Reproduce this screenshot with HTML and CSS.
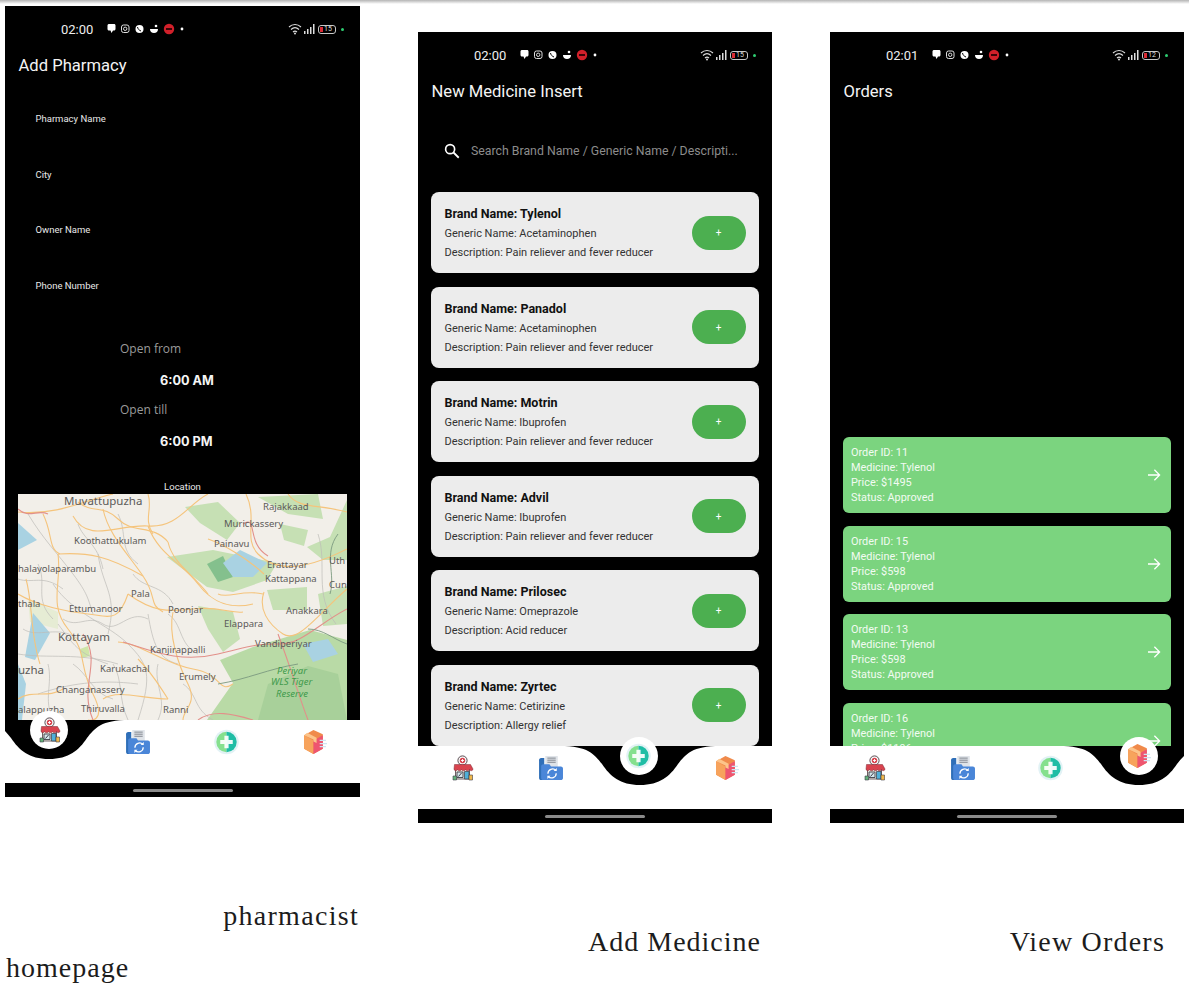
FILE: index.html
```html
<!DOCTYPE html>
<html lang="en">
<head>
    <meta charset="UTF-8">
    <meta name="viewport" content="width=device-width, initial-scale=1.0">
    <title>Pharmacist screens</title>
    <link rel="stylesheet" href="styles.css">
</head>
<body>
    <svg class="defs" width="0" height="0" aria-hidden="true">
        <symbol id="notch" viewBox="-80 0 160 40">
            <path d="M-80 0H80C52 0 46 8 38 18 30 30 20 39 0 39-20 39-30 30-38 18-46 8-52 0-80 0Z" fill="#000"/>
        </symbol>
        <symbol id="shop" viewBox="0 0 24 26">
            <circle cx="12" cy="5.500" r="4.600" fill="#f6f6f6" stroke="#4a3a40" stroke-width=".9"/>
            <circle cx="12" cy="5.500" r="2.700" fill="#d8434e"/>
            <path d="M10.600 5.500h2.800M12 4.100v2.800" stroke="#fff" stroke-width="1"/>
            <path d="M5 14h14v10H5z" fill="#ece8e0" stroke="#4a3a40" stroke-width=".8"/>
            <path d="M4 9.500h16l2.500 4.500c0 2-2.800 2.200-3.600.6-.8 1.600-3.100 1.600-3.900 0-.8 1.600-3.200 1.600-4 0-.8 1.600-3.100 1.600-3.900 0-.8 1.600-3.600 1.400-3.600-.6z" fill="#d8434e" stroke="#7a2a34" stroke-width=".5"/>
            <path d="M6.500 17h6v5.500h-6z" fill="#d5e6ec" stroke="#3c3c46" stroke-width=".9"/>
            <path d="M8 21.500l3-3.500" stroke="#3c3c46" stroke-width="1"/>
            <path d="M14 16.500h4.500V24H14z" fill="#4fb0d8" stroke="#3c3c46" stroke-width=".7"/>
            <path d="M2.500 21h3.500v4H2.500z" fill="#63b27a" stroke="#3c3c46" stroke-width=".6"/>
            <path d="M18.500 20H22v5h-3.500z" fill="#f1b84b" stroke="#3c3c46" stroke-width=".6"/>
        </symbol>
        <symbol id="folder" viewBox="0 0 24 25">
            <path d="M1 5c0-1 .7-2 2-2h3v21H3c-1.300 0-2-.8-2-2z" fill="#2f6fb8"/>
            <path d="M7 1h12v11H7z" fill="#dfe3e8"/>
            <path d="M9 3h8M9 5h8M9 7h8" stroke="#7d828a" stroke-width=".9"/>
            <path d="M5 9h6l1.500 2H22c1 0 2 .8 2 2v9c0 1.300-1 2-2 2H5c-1 0-2-.7-2-2V11c0-1.300 1-2 2-2z" fill="#4a86d8"/>
            <path d="M9.500 18a4.500 4.500 0 0 1 7.700-3.200M17.500 17.500a4.500 4.500 0 0 1-7.700 3.200" fill="none" stroke="#fff" stroke-width="1.200"/>
            <path d="M18 12.500v3h-3zM9 23v-3h3z" fill="#fff"/>
        </symbol>
        <symbol id="plus" viewBox="0 0 24 24">
            <circle cx="12" cy="12" r="11.800" fill="#e2f2f5"/>
            <path d="M12 2.200a9.800 9.800 0 0 0 0 19.600z" fill="#85e08e"/>
            <path d="M12 2.200a9.800 9.800 0 0 1 0 19.600z" fill="#1fbda5"/>
            <path d="M10 6h4v4h4v4h-4v4h-4v-4H6v-4h4z" fill="#fff" fill-opacity=".92"/>
        </symbol>
        <symbol id="box" viewBox="0 0 24 25">
            <path d="M11 1l9 4v14l-9 5-9-5V6z" fill="#f08a4b"/>
            <path d="M2 6l9 5v13l-9-5z" fill="#f7a35c"/>
            <path d="M11 11l9-5v13l-9 5z" fill="#ee5570"/>
            <path d="M5 3.500l9 5v5l-3-1.500V10L2 6z" fill="#fcc48a"/>
            <path d="M17 11h6M17 14h7M17 17h6" stroke="#cfe4f2" stroke-width="1.300"/>
        </symbol>
        <symbol id="status-left" viewBox="0 0 84 12">
            <path d="M1.500 2.500c0-1 .8-1.500 1.500-1.500h5c1 0 1.500.6 1.500 1.500V6c0 .8-.6 1.500-1.500 1.500H7L5.500 10 4.500 7.500H3C2 7.500 1.500 6.800 1.500 6z" fill="#fff"/>
            <rect x="15.500" y="2" width="7.500" height="7.500" rx="2" fill="none" stroke="#ddd"/>
            <circle cx="19.200" cy="5.800" r="1.700" fill="none" stroke="#ddd"/>
            <circle cx="33.500" cy="6" r="4" fill="#fff"/>
            <path d="M31.500 4c.4 2 1.500 3.200 3.500 4" stroke="#000" fill="none"/>
            <path d="M44 6h8c0 2.500-1.500 4-4 4s-4-1.500-4-4z" fill="#fff"/>
            <circle cx="50" cy="3" r="1.300" fill="#fff"/>
            <circle cx="63" cy="6" r="5.200" fill="#d1202a"/>
            <path d="M60 6h6" stroke="#3a0508" stroke-width="2"/>
            <circle cx="76" cy="6" r="1.400" fill="#fff"/>
        </symbol>
        <symbol id="wifi" viewBox="0 0 30 12">
            <path d="M1 4c3.500-3.300 8.500-3.300 12 0M3 6.500c2.500-2.300 5.500-2.300 8 0M5 9c1.300-1.200 2.700-1.200 4 0" fill="none" stroke="#ddd" stroke-width="1.100"/>
            <circle cx="7" cy="10.500" r="1" fill="#ddd"/>
            <path d="M16 8h1.500v3H16zM19 6h1.500v5H19zM22 4h1.500v7H22zM25 1h1.500v10H25z" fill="#ddd"/>
        </symbol>
        <symbol id="arrow" viewBox="0 0 24 24">
            <path d="M4 12h15M12.500 5l7 7-7 7" fill="none" stroke="#fff" stroke-width="1.700"/>
        </symbol>
    </svg>

    <div class="topline"></div>

    <main class="sheet">
        <section class="col col-one">
            <div class="phone">
                <div class="status">
                    <span class="time">02:00</span>
                    <svg class="status-left"><use href="#status-left"/></svg>
                    <span class="status-right">
                        <svg class="wifi"><use href="#wifi"/></svg>
                        <span class="battery"><i class="charge"></i>15</span>
                        <span class="dot"></span>
                    </span>
                </div>
                <h1 class="title">Add Pharmacy</h1>
                <div class="content form">
                    <p class="field">Pharmacy Name</p>
                    <p class="field">City</p>
                    <p class="field">Owner Name</p>
                    <p class="field">Phone Number</p>
                    <div class="hours">
                        <p class="hours-label">Open from</p>
                        <p class="hours-value">6:00 AM</p>
                        <p class="hours-label">Open till</p>
                        <p class="hours-value">6:00 PM</p>
                    </div>
                    <p class="location">Location</p>
                    <svg class="map" viewBox="0 0 329 226" preserveAspectRatio="none">
                        <rect width="329" height="226" fill="#f2efe9"/>
                        <g fill="#c6e0b4">
                            <path d="M167 13L200 8 222 29 209 46 182 29Z"/>
                            <path d="M149 63L195 56 259 69 249 86 215 98 189 93 162 73Z"/>
                            <path d="M249 96L289 93 289 116 255 116Z"/>
                            <path d="M289 53L312 43 329 6V66H305Z"/>
                            <path d="M240 3L300 0 305 25 270 20Z"/>
                            <path d="M180 112L215 118 222 145 205 158 190 135Z"/>
                            <path d="M262 30L290 36 286 52 266 46Z"/>
                            <path d="M300 100L329 92V130L305 132Z"/>
                        </g>
                        <path d="M10 105L40 118 40 135 12 128Z" fill="#e6ecd4"/>
                        <path d="M62 155L70 152 72 162 64 164Z" fill="#cfe5a9"/>
                        <path d="M202 166L235 153 292 136 329 146V226H189L215 189Z" fill="#b9daa6"/>
                        <path d="M250 190L290 172 320 180 329 226H240Z" fill="#a8d09a"/>
                        <path d="M189 70L205 62 215 83 200 88Z" fill="#84c08d"/>
                        <g fill="#a9d2e2">
                            <path d="M205 69L222 56 249 69 235 83 215 83Z"/>
                            <path d="M0 29L19 46 0 56Z"/>
                            <path d="M15 119L32 139 17 166 7 163Z"/>
                            <path d="M0 170L8 190 4 226H0Z"/>
                            <path d="M285 150L310 145 320 160 295 168Z"/>
                        </g>
                        <g fill="none" stroke="#bdbbb8" stroke-width=".7">
                            <path d="M10 20C25 45 40 60 55 80S70 105 75 120"/>
                            <path d="M35 90C55 120 90 130 110 150S135 180 120 226"/>
                            <path d="M80 60C85 95 100 100 90 140"/>
                            <path d="M130 120C135 150 140 165 160 170"/>
                            <path d="M40 130C55 150 60 160 90 170"/>
                            <path d="M0 160C30 165 60 158 100 170"/>
                            <path d="M20 200C50 190 80 185 120 190"/>
                            <path d="M300 40C310 70 295 100 318 130"/>
                            <path d="M20 70C30 90 15 105 35 125"/>
                            <path d="M60 30C65 45 80 50 85 75"/>
                            <path d="M100 20C110 40 100 55 120 70"/>
                            <path d="M45 125C60 135 70 120 85 130S110 115 130 125"/>
                            <path d="M5 135C20 145 40 130 60 145"/>
                            <path d="M95 170C105 185 100 205 110 226"/>
                            <path d="M30 170C35 190 25 205 35 226"/>
                            <path d="M140 170C135 190 150 205 140 226"/>
                            <path d="M115 80C125 95 145 90 155 110"/>
                            <path d="M150 120C165 130 160 150 180 160"/>
                            <path d="M0 85C15 90 25 80 45 95"/>
                            <path d="M55 170C70 180 75 200 95 205"/>
                            <path d="M165 190C180 200 175 215 195 226"/>
                        </g>
                        <g fill="none" stroke="#f5c47c" stroke-width="1.100">
                            <path d="M0 18C40 22 70 5 95 0"/>
                            <path d="M55 22C70 50 100 30 130 32S170 10 190 0"/>
                            <path d="M85 15C90 40 110 60 125 82S130 110 145 118"/>
                            <path d="M130 32C140 60 165 70 180 90S215 115 235 110"/>
                            <path d="M40 60C44 90 30 110 50 135S60 170 75 200 70 226 70 226"/>
                            <path d="M40 60C70 58 90 62 125 82"/>
                            <path d="M110 100C135 118 150 118 175 115S215 120 225 118"/>
                            <path d="M155 118C150 140 160 170 170 190S165 215 165 226"/>
                            <path d="M100 148C125 150 145 170 175 175S200 200 215 190"/>
                            <path d="M0 100C20 112 50 118 70 120S100 130 110 100"/>
                            <path d="M228 0C240 25 225 45 240 60S280 80 329 55"/>
                            <path d="M246 98C240 115 250 130 265 140S300 120 329 95"/>
                            <path d="M190 45C205 50 230 65 246 80"/>
                            <path d="M60 8C75 20 85 10 100 25S135 30 150 48"/>
                            <path d="M25 20C35 40 30 55 42 60"/>
                            <path d="M130 0C135 15 125 25 135 40"/>
                            <path d="M150 48C155 70 175 80 190 100"/>
                            <path d="M8 85C15 110 12 140 22 170"/>
                            <path d="M120 165C135 180 140 190 150 205"/>
                            <path d="M85 205C100 195 125 205 150 205"/>
                            <path d="M200 100C210 105 225 95 245 100"/>
                            <path d="M0 205C15 195 30 205 45 195"/>
                            <path d="M270 0C280 15 300 10 329 18"/>
                        </g>
                        <g fill="none" stroke="#e2908a" stroke-width="1.100">
                            <path d="M65 140C85 170 60 190 75 226"/>
                            <path d="M105 148C130 155 160 170 200 160S240 150 262 150 300 130 329 115"/>
                            <path d="M225 30C240 20 228 50 250 62"/>
                            <path d="M260 140C275 180 280 200 290 226"/>
                            <path d="M0 15C10 25 20 15 30 20"/>
                            <path d="M180 226C195 215 215 220 235 226"/>
                        </g>
                        <path d="M290 135C305 135 315 145 329 150M200 190C230 185 250 175 280 170M320 40C305 60 318 80 312 100" fill="none" stroke="#7c9a80" stroke-width=".9"/>
                        <g class="map-labels">
                            <text x="46" y="11" class="big">Muvattupuzha</text>
                            <text x="245" y="16">Rajakkaad</text>
                            <text x="206" y="33">Murickassery</text>
                            <text x="196" y="53">Painavu</text>
                            <text x="56" y="50">Koothattukulam</text>
                            <text x="249" y="74">Erattayar</text>
                            <text x="311" y="70">Uth</text>
                            <text x="0" y="78">halayolaparambu</text>
                            <text x="247" y="88">Kattappana</text>
                            <text x="311" y="94">Cun</text>
                            <text x="113" y="103">Pala</text>
                            <text x="0" y="113">thala</text>
                            <text x="51" y="118">Ettumanoor</text>
                            <text x="150" y="119">Poonjar</text>
                            <text x="268" y="120">Anakkara</text>
                            <text x="206" y="133">Elappara</text>
                            <text x="40" y="147" class="big">Kottayam</text>
                            <text x="237" y="153">Vandiperiyar</text>
                            <text x="132" y="159">Kanjirappalli</text>
                            <text x="259" y="180" class="park">Periyar</text>
                            <text x="253" y="191" class="park">WLS Tiger</text>
                            <text x="258" y="203" class="park">Reserve</text>
                            <text x="82" y="178">Karukachal</text>
                            <text x="0" y="180" class="big">uzha</text>
                            <text x="161" y="186">Erumely</text>
                            <text x="38" y="199">Changanassery</text>
                            <text x="63" y="218">Thiruvalla</text>
                            <text x="145" y="219">Ranni</text>
                            <text x="0" y="219">alappuzha</text>
                        </g>
                    </svg>
                </div>
                <nav class="nav">
                    <svg class="notch notch-one"><use href="#notch"/></svg>
                    <span class="nav-item active"><svg><use href="#shop"/></svg></span>
                    <span class="nav-item"><svg><use href="#folder"/></svg></span>
                    <span class="nav-item"><svg><use href="#plus"/></svg></span>
                    <span class="nav-item"><svg><use href="#box"/></svg></span>
                </nav>
                <div class="home"><span class="home-bar"></span></div>
            </div>
            <p class="caption caption-top">pharmacist</p>
            <p class="caption caption-left">homepage</p>
        </section>

        <section class="col col-two">
            <div class="phone">
                <div class="status">
                    <span class="time">02:00</span>
                    <svg class="status-left"><use href="#status-left"/></svg>
                    <span class="status-right">
                        <svg class="wifi"><use href="#wifi"/></svg>
                        <span class="battery"><i class="charge"></i>15</span>
                        <span class="dot"></span>
                    </span>
                </div>
                <h1 class="title">New Medicine Insert</h1>
                <div class="content medicines">
                    <div class="search">
                        <svg class="search-icon" viewBox="0 0 24 24"><circle cx="9.500" cy="9.500" r="6" fill="none" stroke="#fff" stroke-width="2.200"/><path d="M14 14l7 7" stroke="#fff" stroke-width="2.400"/></svg>
                        <span class="search-text">Search Brand Name / Generic Name / Descripti...</span>
                    </div>
                    <div class="med-card">
                        <div class="med-info">
                            <p class="brand">Brand Name: Tylenol</p>
                            <p class="med-line">Generic Name: Acetaminophen</p>
                            <p class="med-line">Description: Pain reliever and fever reducer</p>
                        </div>
                        <button class="add-btn">+</button>
                    </div>
                    <div class="med-card">
                        <div class="med-info">
                            <p class="brand">Brand Name: Panadol</p>
                            <p class="med-line">Generic Name: Acetaminophen</p>
                            <p class="med-line">Description: Pain reliever and fever reducer</p>
                        </div>
                        <button class="add-btn">+</button>
                    </div>
                    <div class="med-card">
                        <div class="med-info">
                            <p class="brand">Brand Name: Motrin</p>
                            <p class="med-line">Generic Name: Ibuprofen</p>
                            <p class="med-line">Description: Pain reliever and fever reducer</p>
                        </div>
                        <button class="add-btn">+</button>
                    </div>
                    <div class="med-card">
                        <div class="med-info">
                            <p class="brand">Brand Name: Advil</p>
                            <p class="med-line">Generic Name: Ibuprofen</p>
                            <p class="med-line">Description: Pain reliever and fever reducer</p>
                        </div>
                        <button class="add-btn">+</button>
                    </div>
                    <div class="med-card">
                        <div class="med-info">
                            <p class="brand">Brand Name: Prilosec</p>
                            <p class="med-line">Generic Name: Omeprazole</p>
                            <p class="med-line">Description: Acid reducer</p>
                        </div>
                        <button class="add-btn">+</button>
                    </div>
                    <div class="med-card">
                        <div class="med-info">
                            <p class="brand">Brand Name: Zyrtec</p>
                            <p class="med-line">Generic Name: Cetirizine</p>
                            <p class="med-line">Description: Allergy relief</p>
                        </div>
                        <button class="add-btn">+</button>
                    </div>
                </div>
                <nav class="nav">
                    <svg class="notch notch-two"><use href="#notch"/></svg>
                    <span class="nav-item"><svg><use href="#shop"/></svg></span>
                    <span class="nav-item"><svg><use href="#folder"/></svg></span>
                    <span class="nav-item active"><svg><use href="#plus"/></svg></span>
                    <span class="nav-item"><svg><use href="#box"/></svg></span>
                </nav>
                <div class="home"><span class="home-bar"></span></div>
            </div>
            <p class="caption caption-two">Add Medicine</p>
        </section>

        <section class="col col-three">
            <div class="phone">
                <div class="status">
                    <span class="time">02:01</span>
                    <svg class="status-left"><use href="#status-left"/></svg>
                    <span class="status-right">
                        <svg class="wifi"><use href="#wifi"/></svg>
                        <span class="battery"><i class="charge"></i>12</span>
                        <span class="dot"></span>
                    </span>
                </div>
                <h1 class="title">Orders</h1>
                <div class="content orders">
                    <div class="order-card">
                        <div>
                            <p>Order ID: 11</p>
                            <p>Medicine: Tylenol</p>
                            <p>Price: $1495</p>
                            <p>Status: Approved</p>
                        </div>
                        <svg class="arrow"><use href="#arrow"/></svg>
                    </div>
                    <div class="order-card">
                        <div>
                            <p>Order ID: 15</p>
                            <p>Medicine: Tylenol</p>
                            <p>Price: $598</p>
                            <p>Status: Approved</p>
                        </div>
                        <svg class="arrow"><use href="#arrow"/></svg>
                    </div>
                    <div class="order-card">
                        <div>
                            <p>Order ID: 13</p>
                            <p>Medicine: Tylenol</p>
                            <p>Price: $598</p>
                            <p>Status: Approved</p>
                        </div>
                        <svg class="arrow"><use href="#arrow"/></svg>
                    </div>
                    <div class="order-card">
                        <div>
                            <p>Order ID: 16</p>
                            <p>Medicine: Tylenol</p>
                            <p>Price: $1196</p>
                            <p>Status: Approved</p>
                        </div>
                        <svg class="arrow"><use href="#arrow"/></svg>
                    </div>
                </div>
                <nav class="nav">
                    <svg class="notch notch-three"><use href="#notch"/></svg>
                    <span class="nav-item"><svg><use href="#shop"/></svg></span>
                    <span class="nav-item"><svg><use href="#folder"/></svg></span>
                    <span class="nav-item"><svg><use href="#plus"/></svg></span>
                    <span class="nav-item active"><svg><use href="#box"/></svg></span>
                </nav>
                <div class="home"><span class="home-bar"></span></div>
            </div>
            <p class="caption caption-three">View Orders</p>
        </section>
    </main>
</body>
</html>
```

FILE: styles.css
```css
*{
    margin: 0;
    padding: 0;
    box-sizing: border-box;
}
html,body{
    height: 985px;
    overflow: hidden;
    background-color: white;
}
body{
    font-family: Roboto, "Liberation Sans", sans-serif;
    position: relative;
}
.defs{
    position: absolute;
}
.topline{
    height: 4px;
    background: linear-gradient(#b4b4b4, #ffffff);
}

/* columns */
.sheet{
    display: flex;
    padding-left: 5px;
}
.col{
    flex: none;
}
.col-one{
    width: 355px;
    margin-top: 2px;
}
.col-two{
    width: 354px;
    margin-left: 58px;
    margin-top: 28px;
}
.col-three{
    width: 354px;
    margin-left: 58px;
    margin-top: 28px;
}

/* phone frame */
.phone{
    height: 791px;
    background-color: black;
    color: white;
    display: flex;
    flex-direction: column;
    overflow: hidden;
}
.status{
    height: 46px;
    flex: none;
    display: flex;
    align-items: center;
    padding-left: 56px;
    padding-right: 16px;
}
.time{
    font-size: 13px;
    width: 40px;
    color: #eeeeee;
}
.status-left{
    width: 84px;
    height: 12px;
    margin-left: 5px;
}
.status-right{
    margin-left: auto;
    display: flex;
    align-items: center;
}
.wifi{
    width: 30px;
    height: 12px;
}
.battery{
    width: 18px;
    height: 9px;
    border: 1px solid #c8c8c8;
    border-radius: 3px;
    font-size: 7px;
    line-height: 7px;
    text-align: center;
    color: #dddddd;
    position: relative;
    padding-left: 2px;
}
.charge{
    position: absolute;
    left: 1px;
    top: 1px;
    width: 3px;
    height: 5px;
    background-color: #d92c34;
}
.dot{
    width: 3px;
    height: 3px;
    border-radius: 50%;
    background-color: #2ecc71;
    margin-left: 5px;
}
.title{
    height: 26px;
    flex: none;
    padding-left: 13.5px;
    padding-top: 1px;
    font-size: 16.600px;
    font-weight: 400;
    line-height: 26px;
    color: #f4f4f4;
}
.content{
    flex: 1;
    min-height: 0;
    overflow: hidden;
}

/* add pharmacy */
.form{
    display: flex;
    flex-direction: column;
}
.field{
    height: 55.5px;
    padding-left: 30.5px;
    padding-top: 35px;
    font-size: 9.500px;
    line-height: 12px;
    color: #e8e8e8;
    flex: none;
}
.hours{
    padding-left: 115px;
    padding-top: 41px;
    flex: none;
}
.hours-label{
    font-family: "Open Sans", sans-serif;
    font-size: 12px;
    line-height: 16px;
    color: #9a9a9a;
}
.hours-value{
    font-family: Inter, sans-serif;
    font-size: 12.700px;
    font-weight: 700;
    line-height: 16px;
    margin-left: 40px;
    margin-top: 16px;
    margin-bottom: 13px;
    color: #f5f5f5;
}
.location{
    text-align: center;
    font-size: 9.500px;
    line-height: 12px;
    margin-top: 18px;
    color: #e8e8e8;
    flex: none;
}
.map{
    display: block;
    flex: none;
    width: 329px;
    height: 226px;
    margin-left: 13px;
    margin-top: 1px;
}
.map-labels text{
    font-family: "Noto Sans", sans-serif;
    font-size: 9.500px;
    fill: #5c5a58;
}
.map-labels .big{
    font-size: 11.500px;
}
.map-labels .park{
    font-style: italic;
    fill: #3f9a4c;
}

/* medicines */
.medicines{
    padding: 0 13px;
}
.search{
    height: 48px;
    margin-top: 23px;
    margin-bottom: 17px;
    display: flex;
    align-items: center;
    padding-left: 12px;
}
.search-icon{
    width: 18px;
    height: 18px;
    flex: none;
}
.search-text{
    margin-left: 10px;
    font-size: 12.300px;
    color: #8c8c8c;
    white-space: nowrap;
}
.med-card{
    height: 81px;
    margin-bottom: 13.500px;
    background-color: #ececec;
    border-radius: 8px;
    display: flex;
    align-items: center;
    padding: 0 13.500px;
    color: #333333;
}
.med-info{
    flex: 1;
    padding-top: 1px;
}
.brand{
    font-size: 12.500px;
    font-weight: 700;
    line-height: 19px;
    margin-bottom: 1px;
    color: #111111;
}
.med-line{
    font-size: 11px;
    line-height: 19px;
}
.add-btn{
    width: 54px;
    height: 34px;
    border: 0;
    border-radius: 17px;
    background-color: #4caf50;
    color: white;
    font-size: 10px;
    font-family: Roboto, sans-serif;
    flex: none;
}

/* orders */
.orders{
    padding: 0 13px;
    padding-top: 333px;
}
.order-card{
    height: 76px;
    margin-bottom: 12.700px;
    background-color: #7bd47f;
    border-radius: 6px;
    display: flex;
    align-items: center;
    justify-content: space-between;
    padding: 0 8px;
    font-size: 10.900px;
    line-height: 15px;
    color: #f2fbf2;
}
.arrow{
    width: 18px;
    height: 18px;
}

/* bottom nav */
.nav{
    height: 63px;
    flex: none;
    background-color: white;
    position: relative;
    display: grid;
    grid-template-columns: repeat(4, 1fr);
    padding-right: 1px;
}
.notch{
    position: absolute;
    top: 0;
    width: 160px;
    height: 40px;
}
.notch-one{
    left: -36px;
}
.notch-two{
    left: 142px;
}
.notch-three{
    left: 229px;
}
.nav-item{
    display: flex;
    justify-content: center;
    height: 44px;
    align-items: center;
    position: relative;
}
.nav-item svg{
    width: 25px;
    height: 26px;
}
.nav-item.active{
    top: -12px;
}
.nav-item.active::before{
    content: "";
    position: absolute;
    left: 50%;
    top: 3px;
    width: 38px;
    height: 38px;
    margin-left: -19px;
    background-color: white;
    border-radius: 50%;
}
.nav-item.active svg{
    position: relative;
}
.home{
    height: 14px;
    flex: none;
    display: flex;
    justify-content: center;
    align-items: center;
}
.home-bar{
    width: 100px;
    height: 3px;
    border-radius: 2px;
    background-color: #8a8a8a;
}

/* captions under the screenshots */
.caption{
    font-family: "Liberation Serif", serif;
    font-size: 28px;
    line-height: 52px;
    letter-spacing: 1px;
    color: #1c1c1c;
}
.caption-top{
    margin-top: 93px;
    text-align: right;
    padding-right: 1px;
    letter-spacing: 1.300px;
}
.caption-two{
    margin-top: 93px;
    text-align: right;
    padding-right: 11px;
}
.caption-three{
    margin-top: 93px;
    text-align: right;
    padding-right: 19px;
    letter-spacing: 1.200px;
}
.caption-left{
    padding-left: 1px;
    letter-spacing: 1px;
}
```
